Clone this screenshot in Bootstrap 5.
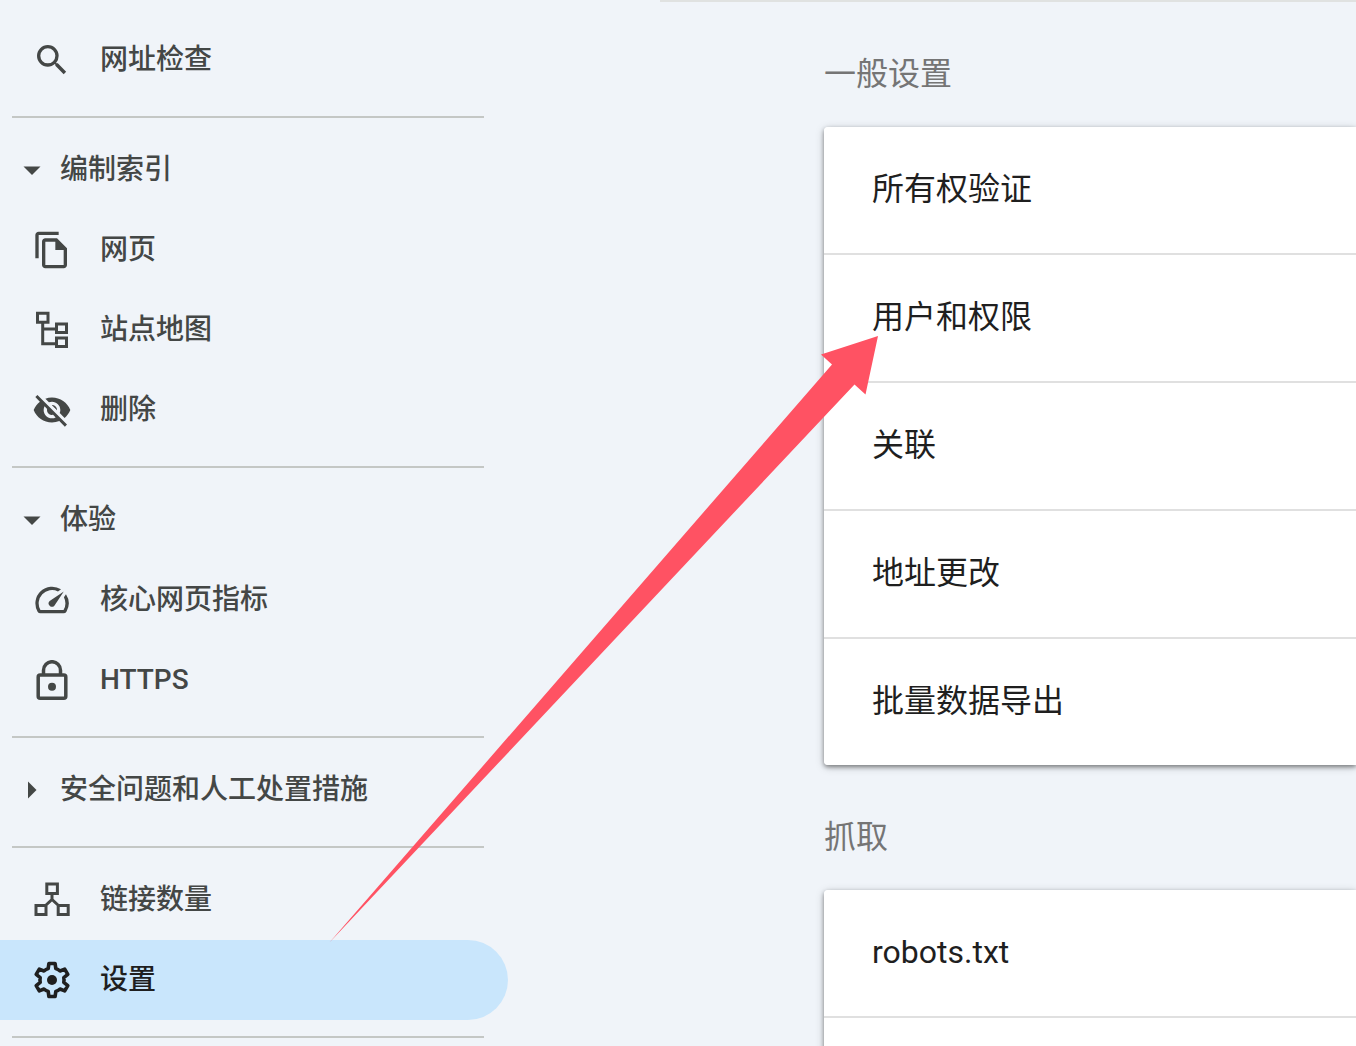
<!DOCTYPE html>
<html lang="zh-CN">
<head>
<meta charset="utf-8">
<meta name="viewport" content="width=device-width, initial-scale=1">
<title>设置</title>
<link href="https://cdn.jsdelivr.net/npm/bootstrap@5.3.0/dist/css/bootstrap.min.css" rel="stylesheet">
<style>
  body { background: #f0f4f9; color: #1f1f1f; font-family: Roboto, "Noto Sans CJK SC", sans-serif; }
  .side-nav { width: 508px; padding-top: 20px; font-size: 28px; line-height: 40px; font-weight: 500; }
  .side-link, .side-toggle { height: 80px; color: #444746; font-weight: 500; }
  .side-link { padding-left: 32px; gap: 28px; border-radius: 0 40px 40px 0; }
  .side-link.active { background: #c9e6fc; color: #1f1f1f; }
  .side-toggle { padding-left: 22px; gap: 18px; }
  .side-icon { width: 40px; height: 40px; fill: currentColor; }
  .caret-icon { width: 20px; height: 20px; fill: currentColor; }
  .lines { fill: none; stroke: currentColor; stroke-width: 3; }
  .side-rule { margin: 16px 24px 12px 12px; border-top: 2px solid #c4c7c5; opacity: 1; }
  .settings-pane { margin-left: 152px; border-top: 2px solid #e0e2e1; padding-left: 164px; font-size: 32px; line-height: 48px; }
  .group-title { margin: 0; padding: 48px 0 29px; font-size: 32px; line-height: 48px; font-weight: 400; color: #757575; }
  .settings-card { border-radius: 4px 0 0 4px; box-shadow: 0 2px 4px rgba(0,0,0,.4), 0 2px 10px rgba(0,0,0,.2); }
  .settings-card .list-group-item { min-height: 128px; padding: 38px 48px 40px; border: 0; border-bottom: 2px solid #e0e0e0; color: #1f1f1f; background: #fff; line-height: 48px; }
  .settings-card .list-group-item:last-child { min-height: 126px; border-bottom: 0; }
  .pointer-arrow { left: 329px; top: 336px; width: 549px; height: 607px; fill: #ff5263; }
</style>
<script src="https://cdn.jsdelivr.net/npm/bootstrap@5.3.0/dist/js/bootstrap.bundle.min.js"></script>
</head>
<body>
<div class="d-flex vh-100 overflow-hidden position-relative">
  <nav class="side-nav flex-shrink-0" aria-label="导航">
    <a href="#" class="side-link d-flex align-items-center text-decoration-none">
      <svg class="side-icon" viewBox="0 0 24 24" aria-hidden="true"><path d="M15.5 14h-.79l-.28-.27A6.47 6.47 0 0 0 16 9.5 6.5 6.5 0 1 0 9.5 16c1.61 0 3.09-.59 4.23-1.57l.27.28v.79l5 4.99L20.49 19l-4.99-5zm-6 0a4.5 4.5 0 1 1 0-9 4.5 4.5 0 0 1 0 9z"/></svg>
      <span>网址检查</span></a>
    <hr class="side-rule">
    <button type="button" class="side-toggle d-flex align-items-center w-100 border-0 bg-transparent py-0 pe-0" aria-expanded="true">
      <svg class="caret-icon" viewBox="0 0 20 20" aria-hidden="true"><path d="M1.500 6.500h17L10 15z"/></svg><span>编制索引</span></button>
    <a href="#" class="side-link d-flex align-items-center text-decoration-none">
      <svg class="side-icon" viewBox="0 0 24 24" aria-hidden="true"><path fill-rule="evenodd" d="M16 1H4c-1.100 0-2 .9-2 2v14h2V3h12V1zm-1 4 6 6v10c0 1.100-.9 2-2 2H8c-1.100 0-2-.9-2-2V7c0-1.100.9-2 2-2h7zm-1 2H8v14h11v-9h-5V7z"/></svg>
      <span>网页</span></a>
    <a href="#" class="side-link d-flex align-items-center text-decoration-none">
      <svg class="side-icon" viewBox="0 0 40 40" aria-hidden="true"><g class="lines"><path d="M5.500 3.200h10.500v9H5.500zM24.500 14h10v8.500h-10zM24.500 28h10v8.500h-10zM10.700 12.500V33.700H24M10.700 19H24"/></g></svg>
      <span>站点地图</span></a>
    <a href="#" class="side-link d-flex align-items-center text-decoration-none">
      <svg class="side-icon" viewBox="0 0 24 24" aria-hidden="true"><path d="M12 7c2.760 0 5 2.240 5 5 0 .65-.13 1.260-.36 1.830l2.920 2.920c1.510-1.260 2.700-2.890 3.430-4.750-1.730-4.390-6-7.500-11-7.500-1.400 0-2.740.25-3.980.7l2.160 2.160C10.740 7.130 11.350 7 12 7zM2 4.270l2.280 2.280.46.46C3.080 8.300 1.780 10.020 1 12c1.730 4.390 6 7.500 11 7.500 1.550 0 3.030-.3 4.380-.84l.42.42L19.730 22 21 20.730 3.270 3 2 4.270zM7.530 9.800l1.550 1.550c-.05.21-.08.43-.08.65 0 1.660 1.340 3 3 3 .22 0 .44-.03.65-.08l1.550 1.550c-.67.33-1.410.53-2.200.53-2.760 0-5-2.240-5-5 0-.79.2-1.530.53-2.200zm4.310-.78 3.150 3.150.02-.16c0-1.660-1.340-3-3-3l-.17.01z"/></svg>
      <span>删除</span></a>
    <hr class="side-rule">
    <button type="button" class="side-toggle d-flex align-items-center w-100 border-0 bg-transparent py-0 pe-0" aria-expanded="true">
      <svg class="caret-icon" viewBox="0 0 20 20" aria-hidden="true"><path d="M1.500 6.500h17L10 15z"/></svg><span>体验</span></button>
    <a href="#" class="side-link d-flex align-items-center text-decoration-none">
      <svg class="side-icon" viewBox="0 0 24 24" aria-hidden="true"><path d="M20.380 8.570l-1.230 1.850a8 8 0 0 1-.22 7.580H5.070A8 8 0 0 1 15.580 6.850l1.850-1.230A10 10 0 0 0 3.350 19a2 2 0 0 0 1.720 1h13.850a2 2 0 0 0 1.740-1 10 10 0 0 0-.27-10.440zm-9.790 6.840a2 2 0 0 0 2.830 0l5.660-8.490-8.490 5.660a2 2 0 0 0 0 2.830z"/></svg>
      <span>核心网页指标</span></a>
    <a href="#" class="side-link d-flex align-items-center text-decoration-none">
      <svg class="side-icon" viewBox="0 0 40 40" aria-hidden="true"><g class="lines" style="stroke-width:3.500"><rect x="6.200" y="15" width="27.600" height="23.200" rx="2"/><path d="M11.500 15v-4.800a8.500 8.500 0 0 1 17 0V15"/></g><circle cx="20" cy="26.700" r="4"/></svg>
      <span>HTTPS</span></a>
    <hr class="side-rule">
    <button type="button" class="side-toggle d-flex align-items-center w-100 border-0 bg-transparent py-0 pe-0" aria-expanded="false">
      <svg class="caret-icon" viewBox="0 0 20 20" aria-hidden="true"><path d="M6 1.500v17l8.500-8.500z"/></svg><span>安全问题和人工处置措施</span></button>
    <hr class="side-rule">
    <a href="#" class="side-link d-flex align-items-center text-decoration-none">
      <svg class="side-icon" viewBox="0 0 40 40" aria-hidden="true"><g class="lines"><path d="M14.800 4h10.600v9.500H14.800zM4 25.500h10v9H4zM26.200 25.500h10v9h-10zM20 14v6.500M13 26l7-6.500 7 6.500"/></g></svg>
      <span>链接数量</span></a>
    <a href="#" class="side-link active d-flex align-items-center text-decoration-none" aria-current="page">
      <svg class="side-icon" viewBox="-20 -20 40 40" aria-hidden="true"><path class="lines" style="stroke-width:3.600" stroke-linejoin="round" d="M-3.800-11.400-3.100-16.500H3.100L3.800-11.400Q6-10.700 8-9L12.700-10.900 15.800-5.600 11.800-2.400Q12.300 0 11.800 2.400L15.800 5.600 12.700 10.900 8 9Q6 10.700 3.800 11.400L3.100 16.500H-3.100L-3.800 11.400Q-6 10.700-8 9L-12.700 10.900-15.800 5.600-11.800 2.400Q-12.300 0-11.800-2.400L-15.800-5.600-12.700-10.900-8-9Q-6-10.700-3.800-11.400z"/><circle r="5"/></svg>
      <span>设置</span></a>
    <hr class="side-rule">
  </nav>

  <main class="settings-pane flex-grow-1">
    <section>
      <h2 class="group-title">一般设置</h2>
      <div class="settings-card list-group">
        <a href="#" class="list-group-item">所有权验证</a>
        <a href="#" class="list-group-item">用户和权限</a>
        <a href="#" class="list-group-item">关联</a>
        <a href="#" class="list-group-item">地址更改</a>
        <a href="#" class="list-group-item">批量数据导出</a>
      </div>
    </section>
    <section>
      <h2 class="group-title">抓取</h2>
      <div class="settings-card list-group">
        <a href="#" class="list-group-item">robots.txt</a>
        <div class="list-group-item"></div>
      </div>
    </section>
  </main>

  <svg class="pointer-arrow position-absolute pe-none" viewBox="329 336 549 607" aria-hidden="true"><path d="M329 943 832 364.500 821 354.500 878 336 865.500 394.500 854.500 384.500z"/></svg>
</div>
</body>
</html>
